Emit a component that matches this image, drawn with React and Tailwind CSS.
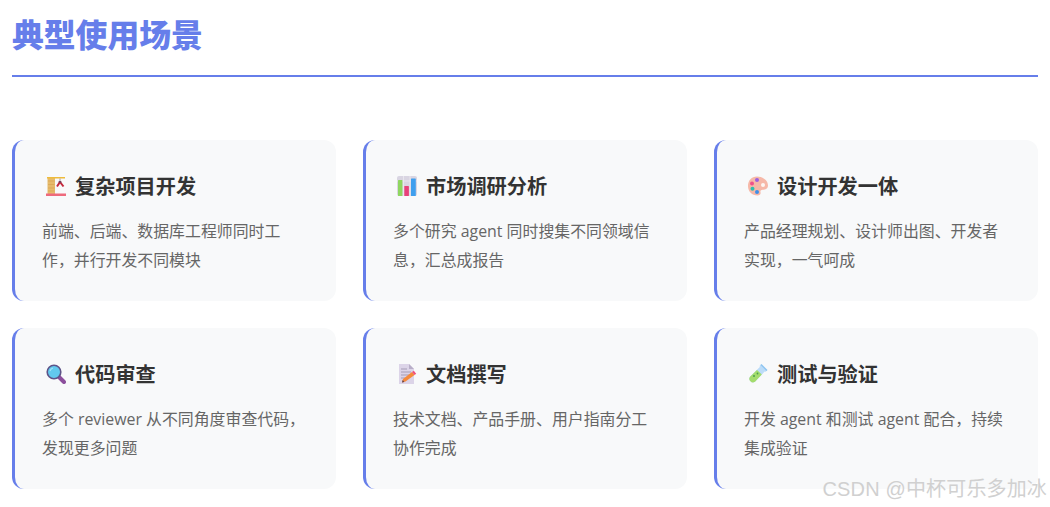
const Crane = () => (
  <svg viewBox="0 0 20 20" className="w-5 h-5">
    <rect x="1.500" y="2" width="7.500" height="16" fill="#e6bb6c" />
    <path d="M2 5h6.500M2 8.500h6.500M2 12h6.500M2 15h6.500" stroke="#d9a552" strokeWidth=".7" />
    <rect x="1" y="1" width="18" height="1.500" fill="#eebb3c" />
    <rect x="0" y="17.500" width="20" height="2.500" fill="#ee6a7c" />
    <rect x="13.500" y="2.500" width="1" height="3.500" fill="#a898a8" />
    <path d="M14 6L11 10.500M14 6L17.500 10.500" stroke="#c4283c" strokeWidth="2" fill="none" />
    <rect x="12.700" y="5" width="2.600" height="2" fill="#7b3f58" />
  </svg>
);
const Chart = () => (
  <svg viewBox="0 0 20 20" className="w-5 h-5">
    <rect x="0" y="0" width="20" height="20" rx="2" fill="#d9d5e2" />
    <path d="M6.500 0v20M13 0v20M0 5h20" stroke="#eceaf1" strokeWidth=".8" />
    <rect x="1" y="4" width="4.400" height="16" rx=".6" fill="#8fd660" />
    <rect x="7.300" y="10" width="4.600" height="10" rx=".6" fill="#e8407a" />
    <rect x="14" y="2.500" width="4.800" height="17.500" rx=".6" fill="#3f9fee" />
  </svg>
);
const Palette = () => (
  <svg viewBox="0 0 20 20" className="w-5 h-5">
    <path d="M9 .5C3.500.5 0 4.500 0 10c0 5.500 4 9.500 9.500 9.500 2.500 0 3.500-1.500 3-3.300-.4-1.500.6-2.500 2.200-2.500 2.800 0 5.300-1.200 5.300-4.200C20 4.500 15 .5 9 .5z" fill="#f6b8a8" />
    <circle cx="9" cy="4" r="2" fill="#9b5fe0" />
    <circle cx="4" cy="7.500" r="2" fill="#f0508a" />
    <circle cx="4.500" cy="12.800" r="2" fill="#2dbfae" />
    <circle cx="9" cy="16" r="2" fill="#3f8fe8" />
    <circle cx="15" cy="9" r="2" fill="#fdf6f2" />
  </svg>
);
const Magnifier = () => (
  <svg viewBox="0 0 20 20" className="w-5 h-5">
    <path d="M13 13l5 5" stroke="#8c4f9c" strokeWidth="4" strokeLinecap="round" />
    <circle cx="8" cy="8" r="6.800" fill="#62c9ee" stroke="#5e5488" strokeWidth="1.600" />
    <path d="M4 7a4 4 0 0 1 3-3" stroke="#a4e4f8" strokeWidth="1.200" fill="none" />
  </svg>
);
const Doc = () => (
  <svg viewBox="0 0 20 20" className="w-5 h-5">
    <path d="M2 0h10l5 5v15H2z" fill="#dcd4e8" />
    <path d="M12 0v5h5z" fill="#b8aec8" />
    <path d="M4 5h6M4 8h10M4 11h9M4 14h4" stroke="#a59cb6" strokeWidth="1" />
    <path d="M5 18.500l1-3.500 9-7 2.500 3-9 6.500z" fill="#f58a3c" />
    <path d="M15 8l1.800-1.300 2.400 3-1.700 1.300z" fill="#f0507c" />
    <path d="M5 18.500l.7-2.400 1.700 2z" fill="#5b4150" />
  </svg>
);
const Tube = () => (
  <svg viewBox="0 0 20 20" className="w-5 h-5">
    <path d="M13 .5l6 6-1.300 1.300-1-.3L7 17.700a3.600 3.600 0 0 1-5-5L11.800 3l-.1-1.200z" fill="#bcdcf8" />
    <path d="M9 6l4.800 4.400L7 17.700a3.600 3.600 0 0 1-5-5z" fill="#a4dc6c" />
    <circle cx="6" cy="12" r="1" fill="#4ca04c" />
    <circle cx="9.500" cy="9.500" r=".9" fill="#4ca04c" />
    <path d="M13 .5l6 6" stroke="#8cc4f0" strokeWidth="1.400" />
  </svg>
);

const cards = [
  { Icon: Crane, title: "复杂项目开发", lines: ["前端、后端、数据库工程师同时工", "作\uFF0C并行开发不同模块"] },
  { Icon: Chart, title: "市场调研分析", lines: ["多个研究 agent 同时搜集不同领域信", "息\uFF0C汇总成报告"] },
  { Icon: Palette, title: "设计开发一体", lines: ["产品经理规划、设计师出图、开发者", "实现\uFF0C一气呵成"] },
  { Icon: Magnifier, title: "代码审查", lines: ["多个 reviewer 从不同角度审查代码\uFF0C", "发现更多问题"] },
  { Icon: Doc, title: "文档撰写", lines: ["技术文档、产品手册、用户指南分工", "协作完成"] },
  { Icon: Tube, title: "测试与验证", lines: ["开发 agent 和测试 agent 配合\uFF0C持续", "集成验证"] },
];

export default function App() {
  return (
    <div className="relative h-[507px] w-[1050px] overflow-hidden bg-white px-3 font-['Noto_Sans_CJK_SC','Noto_Sans',sans-serif]">
      <h2 className="h-[77px] border-b-2 border-[#667eea] pt-[11px] text-[31.8px] leading-[44px] font-black text-[#667eea]">
        典型使用场景
      </h2>
      <div className="mt-[63px] grid grid-cols-3 gap-[27px]">
        {cards.map(({ Icon, title, lines }) => (
          <div key={title} className="h-[161px] rounded-xl border-l-[3px] border-[#667eea] bg-[#f8f9fa] px-[27px] pt-[30px]">
            <h3 className="flex h-[32px] items-center text-[20.2px] leading-[32px] font-bold text-[#333]">
              <span className="mr-[9px] ml-1"><Icon /></span>
              {title}
            </h3>
            <div className="mt-[15px] font-['Open_Sans','Noto_Sans_CJK_SC',sans-serif] text-[15.9px] leading-[29px] font-normal text-[#666]">
              {lines.map((line) => (
                <p key={line} className="whitespace-nowrap">{line}</p>
              ))}
            </div>
          </div>
        ))}
      </div>
      <div className="absolute right-[3px] bottom-[4px] font-['Liberation_Sans','Noto_Sans_CJK_SC',sans-serif] text-[20px] leading-[28px] tracking-[0.15px] text-[#d0d0d0]">
        CSDN @中杯可乐多加冰
      </div>
    </div>
  );
}
